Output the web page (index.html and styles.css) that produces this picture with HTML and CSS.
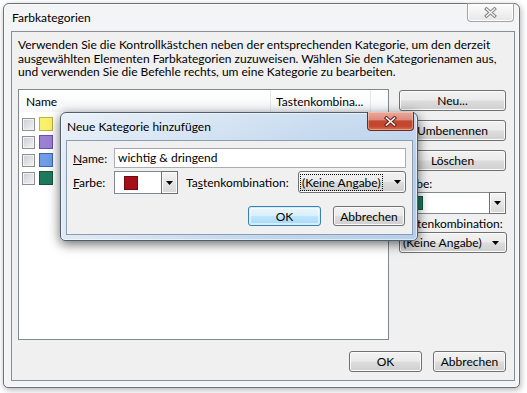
FILE: index.html
```html
<!DOCTYPE html>
<html lang="de">
<head>
<meta charset="utf-8">
<title>Farbkategorien</title>
<link rel="stylesheet" href="styles.css">
</head>
<body>
<div class="window">
  <div class="titlebar">
    <span class="title">Farbkategorien</span>
    <div class="close-main">
      <svg width="13" height="11" viewBox="0 0 13 11"><path d="M2.5 2 L10.5 9 M10.5 2 L2.5 9" stroke="#858585" stroke-width="3.4" stroke-linecap="square" fill="none"/><path d="M2.5 2 L10.5 9 M10.5 2 L2.5 9" stroke="#fbfbfb" stroke-width="1.3" stroke-linecap="square" fill="none"/></svg>
    </div>
  </div>
  <div class="client">
    <p class="intro">Verwenden Sie die Kontrollkästchen neben der entsprechenden Kategorie, um den derzeit<br>ausgewählten Elementen Farbkategorien zuzuweisen. Wählen Sie den Kategorienamen aus,<br>und verwenden Sie die Befehle rechts, um eine Kategorie zu bearbeiten.</p>
    <div class="main">
      <div class="list">
        <div class="list-head">
          <div class="col col-name">Name</div>
          <div class="col col-key">Tastenkombina...</div>
          <div class="col col-rest"></div>
        </div>
        <div class="rows">
          <div class="row"><span class="check"></span><span class="swatch yellow"></span></div>
          <div class="row"><span class="check"></span><span class="swatch purple"></span></div>
          <div class="row"><span class="check"></span><span class="swatch blue"></span></div>
          <div class="row"><span class="check"></span><span class="swatch green"></span></div>
        </div>
      </div>
      <div class="side">
        <button class="btn side-btn">Neu...</button>
        <button class="btn side-btn">Umbenennen</button>
        <button class="btn side-btn">Löschen</button>
        <div class="side-label">Farbe:</div>
        <div class="combo side-combo">
          <span class="combo-field"><span class="swatch-sm green"></span></span>
          <span class="combo-btn"><svg width="7" height="4" viewBox="0 0 7 4"><path d="M0 0H7L3.5 4Z" fill="#000"/></svg></span>
        </div>
        <div class="side-label second">Tastenkombination:</div>
        <div class="dropdown side-dd">
          <span class="dd-text">(Keine Angabe)</span>
          <svg width="7" height="4" viewBox="0 0 7 4"><path d="M0 0H7L3.5 4Z" fill="#000"/></svg>
        </div>
      </div>
    </div>
    <div class="footer">
      <button class="btn foot-btn">OK</button>
      <button class="btn foot-btn">Abbrechen</button>
    </div>
  </div>
</div>

<div class="modal">
  <div class="m-titlebar">
    <span class="m-title">Neue Kategorie hinzufügen</span>
    <div class="close-red">
      <svg width="13" height="11" viewBox="0 0 13 11"><path d="M2.5 2 L10.5 9 M10.5 2 L2.5 9" stroke="#6b2a22" stroke-width="3.6" stroke-linecap="square" fill="none"/><path d="M2.5 2 L10.5 9 M10.5 2 L2.5 9" stroke="#ffffff" stroke-width="1.5" stroke-linecap="square" fill="none"/></svg>
    </div>
  </div>
  <div class="m-client">
    <div class="m-row">
      <span class="m-label"><u>N</u>ame:</span>
      <div class="m-input">wichtig &amp; dringend</div>
    </div>
    <div class="m-row second">
      <span class="m-label"><u>F</u>arbe:</span>
      <div class="combo m-combo">
        <span class="combo-field"><span class="swatch-red"></span></span>
        <span class="combo-btn"><svg width="7" height="4" viewBox="0 0 7 4"><path d="M0 0H7L3.5 4Z" fill="#000"/></svg></span>
      </div>
      <span class="m-label2">Ta<u>s</u>tenkombination:</span>
      <div class="dropdown m-dd">
        <span class="dd-text focus">(Keine Angabe)</span>
        <svg width="7" height="4" viewBox="0 0 7 4"><path d="M0 0H7L3.5 4Z" fill="#000"/></svg>
      </div>
    </div>
    <div class="m-buttons">
      <button class="btn default m-btn">OK</button>
      <button class="btn m-btn">Abbrechen</button>
    </div>
  </div>
</div>
</body>
</html>
```
FILE: styles.css
```css
* { box-sizing: border-box; }

html, body {
  margin: 0;
  padding: 0;
}

body {
  width: 527px;
  height: 393px;
  overflow: hidden;
  background: #ffffff;
  font-family: Lato, "Liberation Sans", sans-serif;
  font-size: 12px;
  color: #000;
}

u { text-decoration: underline; text-underline-offset: 1px; }

/* ---------- main window ---------- */
.window {
  margin: 3px 0 0 3px;
  width: 517px;
  height: 385px;
  border: 1px solid #6c6f74;
  border-radius: 6px 6px 5px 5px;
  background: #f3f4f6;
  box-shadow: 1px 2px 6px rgba(0, 0, 0, 0.3), inset 0 0 0 1px #fbfbfb;
  display: flex;
  flex-direction: column;
}

.titlebar {
  height: 27px;
  flex: none;
  display: flex;
  align-items: center;
  padding-left: 8px;
}

.title { font-size: 12px; }

.close-main {
  margin-left: auto;
  align-self: flex-start;
  margin-top: -1px;
  margin-right: 5px;
  width: 47px;
  height: 19px;
  border: 1px solid #a3a3a3;
  border-top-color: #8d8d8d;
  border-radius: 0 0 4px 4px;
  background: linear-gradient(#fdfdfd, #f0f0f0 55%, #e6e6e6);
  box-shadow: inset 0 0 0 1px #ffffff;
  display: flex;
  align-items: center;
  justify-content: center;
}

.client {
  flex: none;
  margin: 0 4px 0 7px;
  height: 350px;
  border: 1px solid #898c93;
  background: #f0f0f0;
  padding: 6px 7px 0 6px;
  display: flex;
  flex-direction: column;
}

.intro {
  margin: 0;
  height: 41px;
  line-height: 13.5px;
  white-space: nowrap;
}

.main {
  margin-top: 10px;
  display: flex;
  gap: 10px;
}

.list {
  width: 371px;
  height: 251px;
  border: 1px solid #828790;
  background: #fff;
}

.list-head {
  display: flex;
  height: 22px;
  background: linear-gradient(#ffffff, #f6f7f9);
}

.col {
  display: flex;
  align-items: center;
  height: 22px;
  border-right: 1px solid #e3e5e9;
}

.col-name { width: 252px; padding-left: 7px; }
.col-key { width: 100px; padding-left: 5px; }
.col-rest { flex: 1; border-right: none; }

.rows { padding-top: 3px; }

.row {
  height: 18px;
  display: flex;
  align-items: center;
  padding-left: 3px;
  gap: 4px;
}

.check {
  width: 13px;
  height: 13px;
  border: 1px solid #8e8f8f;
  background: linear-gradient(135deg, #c9cdd3, #f4f4f4);
  box-shadow: inset 0 0 0 1px #f2f2f2;
}

.swatch {
  width: 14px;
  height: 14px;
  border: 1px solid;
}

.yellow { background: #f8f16c; border-color: #c0b23a; }
.purple { background: #9b81d3; border-color: #6a4fae; }
.blue   { background: #6e9de5; border-color: #3c66b3; }
.green  { background: #1f7a5d; border-color: #13563f; }

/* ---------- buttons ---------- */
.btn {
  font: inherit;
  color: #000;
  padding: 0;
  border: 1px solid #707070;
  border-radius: 3px;
  background: linear-gradient(#f2f2f2 0%, #ebebeb 48%, #dddddd 52%, #cfcfcf 100%);
  box-shadow: inset 0 0 0 1px #fbfbfb;
  display: flex;
  align-items: center;
  justify-content: center;
}

.btn.default {
  border-color: #3c7fb1;
  background: linear-gradient(#eaf6fd 0%, #d9f0fc 48%, #bee6fd 52%, #a7d9f5 100%);
  box-shadow: inset 0 0 0 1px #d0eefd, inset 0 0 0 2px rgba(255, 255, 255, 0.5);
}

.side {
  width: 108px;
  padding-top: 1px;
  display: flex;
  flex-direction: column;
}

.side-btn {
  width: 107px;
  height: 21px;
  margin-bottom: 9px;
}

.side-label {
  margin-top: -4px;
  height: 16px;
  line-height: 16px;
  padding-left: 1px;
}

.side-label.second {
  margin-top: 2px;
}

.combo {
  display: flex;
  border: 1px solid #828790;
  background: #fff;
}

.side-combo {
  width: 107px;
  height: 22px;
}

.combo-field {
  flex: 1;
  display: flex;
  align-items: center;
  padding-left: 9px;
}

.combo-btn {
  width: 17px;
  flex: none;
  border: 1px solid #6f6f6f;
  margin: -1px -1px -1px 0;
  background: linear-gradient(#f5f5f5, #e6e6e6 50%, #d6d6d6);
  box-shadow: inset 0 0 0 1px #fafafa;
  display: flex;
  align-items: center;
  justify-content: center;
}

.swatch-sm {
  width: 14px;
  height: 14px;
  border: 1px solid #13563f;
}

.dropdown {
  display: flex;
  align-items: center;
  justify-content: space-between;
  border: 1px solid #707070;
  border-radius: 3px;
  background: linear-gradient(#f2f2f2 0%, #ebebeb 48%, #dddddd 52%, #cfcfcf 100%);
  box-shadow: inset 0 0 0 1px #fbfbfb;
  padding: 0 7px 0 2px;
}

.side-dd {
  width: 108px;
  height: 21px;
}

.footer {
  margin-top: 11px;
  display: flex;
  justify-content: flex-end;
  gap: 11px;
  padding-right: 1px;
}

.foot-btn {
  width: 73px;
  height: 21px;
}

/* ---------- modal ---------- */
.modal {
  position: absolute;
  left: 60px;
  top: 112px;
  width: 358px;
  height: 129px;
  border: 1px solid #505e6c;
  border-radius: 6px 6px 5px 5px;
  background:
    linear-gradient(180deg, rgba(255, 255, 255, 0.25), rgba(255, 255, 255, 0) 40%),
    linear-gradient(100deg, #e3ecf6 0%, #cfe0f2 35%, #bcd4ec 70%, #b6cfea 100%);
  box-shadow: 0 3px 12px rgba(0, 0, 0, 0.6), inset 0 0 0 1px rgba(255, 255, 255, 0.55);
  padding: 0 4px 5px 5px;
  display: flex;
  flex-direction: column;
}

.m-titlebar {
  height: 27px;
  flex: none;
  display: flex;
  align-items: center;
  padding-left: 1px;
}

.close-red {
  margin-left: auto;
  align-self: flex-start;
  margin-top: -1px;
  margin-right: -1px;
  width: 47px;
  height: 19px;
  border: 1px solid #6e2a20;
  border-top: none;
  border-radius: 0 0 4px 4px;
  background: linear-gradient(#e9aa9c 0%, #dc8c7c 42%, #c6462f 50%, #c24630 78%, #d8734f 100%);
  box-shadow: inset 0 0 0 1px rgba(255, 215, 200, 0.45);
  display: flex;
  align-items: center;
  justify-content: center;
}

.m-client {
  height: 95px;
  flex: none;
  border: 1px solid #8c9db0;
  background: #f0f0f0;
  padding: 7px 6px 0 6px;
}

.m-row {
  display: flex;
  align-items: center;
  height: 20px;
}

.m-row.second {
  margin-top: 3px;
  height: 23px;
  align-items: flex-start;
}

.m-row.second .m-label,
.m-row.second .m-label2 {
  line-height: 23px;
}

.m-label { width: 41px; flex: none; }

.m-input {
  width: 292px;
  height: 20px;
  border: 1px solid #abadb3;
  border-top-color: #a3a6ad;
  background: #fff;
  padding-left: 3px;
  line-height: 18px;
}

.m-combo {
  width: 64px;
  height: 23px;
}

.m-combo .combo-field { padding-left: 9px; }

.swatch-red {
  width: 14px;
  height: 14px;
  background: #a50f18;
  border: 1px solid #6e0a10;
}

.m-label2 {
  margin-left: 8px;
  width: 112px;
  flex: none;
}

.m-dd {
  width: 108px;
  height: 22px;
  padding: 0 4px 0 2px;
}

.dd-text { line-height: 15px; padding: 0 1px; }

.dd-text.focus {
  outline: 1px dotted #000;
  outline-offset: 0;
}

.m-buttons {
  margin-top: 12px;
  display: flex;
  justify-content: flex-end;
  gap: 12px;
  padding-right: 1px;
}

.m-btn {
  width: 72px;
  height: 20px;
}

.m-btn.default { width: 73px; }
```
